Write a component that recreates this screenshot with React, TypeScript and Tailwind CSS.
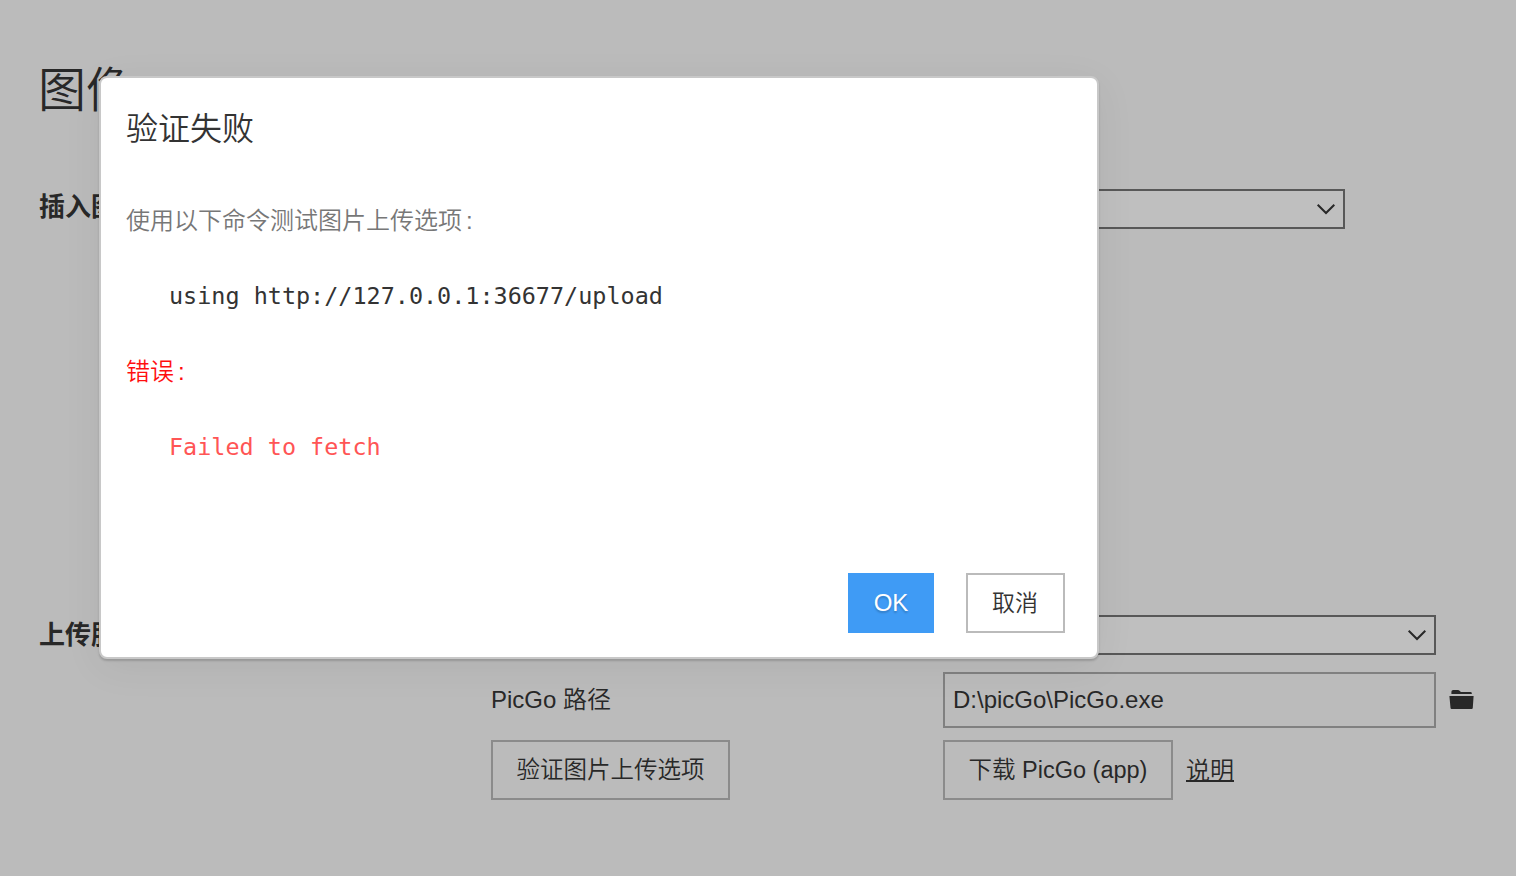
import React from "react";

function SelectBox({ className }: { className: string }) {
  return (
    <div className={`flex h-10 items-center justify-end border-2 border-[#585858] bg-[#bfbfbf] pr-[7px] ${className}`}>
      <svg width="20" height="12" viewBox="0 0 20 12" fill="none" stroke="#282828" strokeWidth="2">
        <path d="M1.7 1.8 L10 10 L18.3 1.8" />
      </svg>
    </div>
  );
}

function FolderIcon() {
  return (
    <svg width="26" height="22" viewBox="0 0 26 22" fill="#282828">
      <path d="M2.4 5 V2.8 Q2.4 1 4.2 1 H9 Q9.9 1 10.6 1.8 L11.9 3.1 H21.4 Q22.8 3.1 22.8 4.2 V5 Z" />
      <path d="M0.4 7 H24.6 L23.8 18.8 Q23.7 20 22.7 20 H2.5 Q1.6 20 1.5 18.8 Z" />
    </svg>
  );
}

function Dialog() {
  return (
    <section
      role="dialog"
      className="absolute left-[99px] top-[76px] flex h-[583px] w-[1000px] flex-col rounded-lg border-2 border-[#c8c8c8] bg-white pl-[25px] pr-8 pb-6 shadow-[0_2px_2px_rgba(0,0,0,0.16),0_8px_40px_rgba(0,0,0,0.06)]"
    >
      <h2 className="mt-[27px] text-[32px] leading-[48px] font-[350] text-[#333333]">验证失败</h2>
      <p className="mt-[50px] leading-9 text-[#777777]">
        使用以下命令测试图片上传选项<span className="inline-block w-3 pl-1">:</span>
      </p>
      <pre className="mt-[39px] pl-[43px] font-['DejaVu_Sans_Mono',monospace] text-[23.45px] leading-9 text-[#333333]">using http://127.0.0.1:36677/upload</pre>
      <p className="mt-10 leading-9 text-[#ff0f0f]">
        错误<span className="inline-block w-3 pl-1">:</span>
      </p>
      <pre className="mt-[39px] pl-[43px] font-['DejaVu_Sans_Mono',monospace] text-[23.45px] leading-9 text-[#ff5555]">Failed to fetch</pre>
      <div className="mt-auto flex justify-end gap-8">
        <button className="h-[60px] w-[86px] bg-[#3f9bf5] text-white [text-shadow:0_2px_2px_rgba(0,0,0,0.2)]">OK</button>
        <button className="h-[60px] w-[99px] border-2 border-[#bbbbbb] pr-px text-[23px] text-[#333333]">取消</button>
      </div>
    </section>
  );
}

export default function App() {
  return (
    <main className="relative h-[876px] w-full overflow-hidden bg-[#bbbbbb] pl-[39px] font-['Liberation_Sans','Noto_Sans_CJK_SC',sans-serif] text-2xl font-[350] text-[#282828]">
      <h1 className="-ml-px pt-[55px] text-[48px] leading-[72px]">图像</h1>
      <div className="mt-[62px] flex h-10">
        <h3 className="-mt-0.5 w-[904px] text-[26px] leading-[40px] font-bold">插入图</h3>
        <SelectBox className="w-[402px]" />
      </div>
      <div className="mt-[386px] flex h-10">
        <h3 className="w-[904px] text-[26px] leading-[40px] font-bold">上传服</h3>
        <SelectBox className="w-[493px]" />
      </div>
      <div className="mt-[17px] flex h-14 items-center pl-[452px]">
        <div className="w-[452px]">PicGo 路径</div>
        <div className="flex h-14 w-[493px] items-center border-2 border-[#808080] pl-2">D:\picGo\PicGo.exe</div>
        <div className="ml-[13px]">
          <FolderIcon />
        </div>
      </div>
      <div className="mt-3 flex h-[60px] items-center pl-[452px]">
        <div className="w-[452px]">
          <button className="h-[60px] w-[239px] border-2 border-[#8b8b8b] pt-0.5 text-[23.5px]">验证图片上传选项</button>
        </div>
        <button className="h-[60px] w-[230px] border-2 border-[#8b8b8b] pt-0.5 text-[23.5px]">下载 PicGo (app)</button>
        <a className="ml-[13px] pt-px underline decoration-2 underline-offset-1">说明</a>
      </div>
      <Dialog />
    </main>
  );
}
